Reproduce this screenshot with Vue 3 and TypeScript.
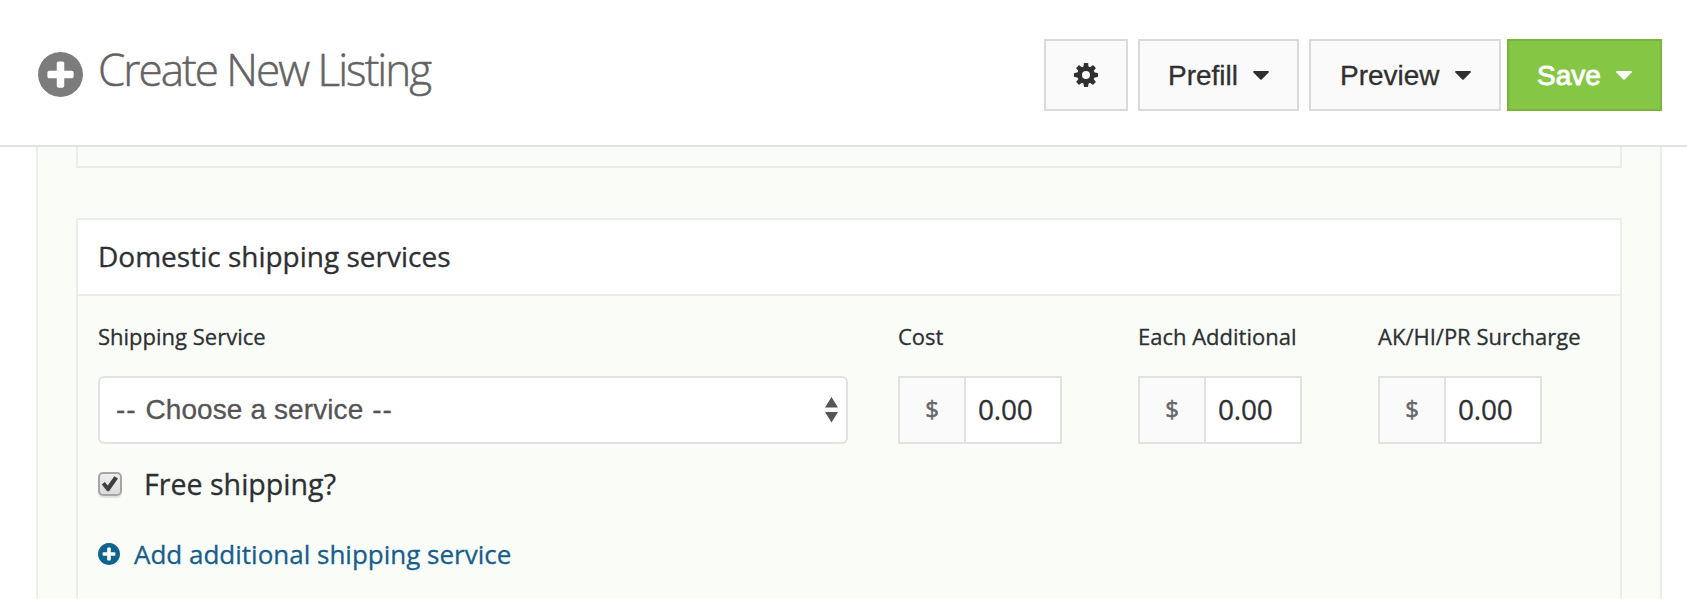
<script setup lang="ts">
import { ref } from 'vue'

interface Fee {
  label: string
  amount: string
}

const menus: string[] = ['Prefill', 'Preview', 'Save']
const fees = ref<Fee[]>([
  { label: 'Cost', amount: '0.00' },
  { label: 'Each Additional', amount: '0.00' },
  { label: 'AK/HI/PR Surcharge', amount: '0.00' },
])
const freeShipping = ref(true)

const plusCircle =
  'M1216 960v-128q0-26-19-45t-45-19h-256v-256q0-26-19-45t-45-19h-128q-26 0-45 19t-19 45v256h-256q-26 0-45 19t-19 45v128q0 26 19 45t45 19h256v256q0 26 19 45t45 19h128q26 0 45-19t19-45v-256h256q26 0 45-19t19-45zm320-64q0 209-103 385.5t-279.5 279.5-385.5 103-385.5-103-279.5-279.5-103-385.5 103-385.5 279.5-279.5 385.5-103 385.5 103 279.5 279.5 103 385.5z'
const toothAngles = [0, 45, 90, 135, 180, 225, 270, 315]
</script>

<template>
  <div class="page">
    <header class="topbar">
      <svg class="title-icon" viewBox="0 128 1536 1536"><path :d="plusCircle" /></svg>
      <h1 class="title">Create New Listing</h1>
      <div class="actions">
        <button class="btn gear" aria-label="Settings">
          <svg viewBox="-12 -12 24 24">
            <circle class="gear-ring" r="6.400" />
            <path v-for="a in toothAngles" :key="a" d="M-2.700 -7.500L-2.100 -11.600Q-2 -12 -1.600 -12H1.600Q2 -12 2.100 -11.600L2.700 -7.500Z" :transform="`rotate(${a})`" />
          </svg>
        </button>
        <button v-for="m in menus" :key="m" class="btn" :class="m.toLowerCase()">
          <span class="btn-text">{{ m }}</span>
          <svg class="caret" viewBox="0 0 16 9"><path d="M1 0H15Q16.400 .3 15.600 1.400L8.700 8.500Q8 9.100 7.300 8.500L.4 1.400Q-.4 .3 1 0Z" /></svg>
        </button>
      </div>
    </header>

    <main class="panel">
      <section class="card previous"></section>
      <section class="card services">
        <h2 class="card-head">Domestic shipping services</h2>
        <div class="card-body">
          <div class="fields">
            <div class="field service">
              <label class="label">Shipping Service</label>
              <div class="select">
                <span class="select-text"><span class="dashes">-- </span>Choose a service<span class="dashes"> --</span></span>
                <svg class="arrows" viewBox="0 0 13 26"><path d="M6.500 0L13 10.500H0ZM0 15H13L6.500 25.500Z" /></svg>
              </div>
            </div>
            <div v-for="fee in fees" :key="fee.label" class="field fee">
              <label class="label">{{ fee.label }}</label>
              <div class="money">
                <span class="currency">$</span>
                <span class="amount">{{ fee.amount }}</span>
              </div>
            </div>
          </div>
          <div class="free" @click="freeShipping = !freeShipping">
            <span class="checkbox">
              <svg v-if="freeShipping" viewBox="0 0 20 20"><path d="M1.800 10.600L4.800 8L7.700 11.500L14.300 2.200L18 4.600L9 17.300H7.200Z" /></svg>
            </span>
            <span>Free shipping?</span>
          </div>
          <a class="add">
            <svg viewBox="0 128 1536 1536"><path :d="plusCircle" /></svg>
            <span>Add additional shipping service</span>
          </a>
        </div>
      </section>
    </main>
  </div>
</template>

<style>
html,
body {
  background: #fff;
  overflow: hidden;
}
</style>

<style scoped>
.page {
  box-sizing: border-box;
  height: 599px;
  overflow: hidden;
  display: flex;
  flex-direction: column;
  font-family: 'Open Sans', sans-serif;
  color: #2d3032;
  -webkit-text-stroke: 0.3px currentColor;
}
.page * {
  box-sizing: border-box;
}
.topbar {
  flex: none;
  height: 147px;
  border-bottom: 2px solid #e3e3e3;
  display: flex;
  align-items: flex-start;
  padding: 39px 25px 0 38px;
}
.title-icon {
  width: 45px;
  height: 45px;
  margin-top: 13px;
  fill: #7c7c7c;
}
.title {
  margin: 0 0 0 15px;
  font-size: 44px;
  line-height: 60px;
  font-weight: 300;
  letter-spacing: -1.98px;
  color: #636363;
  white-space: nowrap;
  -webkit-text-stroke: 0.5px #636363;
}
.actions {
  margin-left: auto;
  display: flex;
}
.btn {
  height: 72px;
  margin: 0 0 0 10px;
  padding: 0;
  border: 2px solid #dadada;
  background: #fafafa;
  color: #303030;
  fill: #303030;
  display: flex;
  align-items: center;
  font: 28px 'Liberation Sans', Arial, sans-serif;
  white-space: nowrap;
  -webkit-text-stroke: 0.3px currentColor;
}
.btn-text {
  padding-top: 1px;
}
.gear {
  width: 84px;
  justify-content: center;
}
.gear svg {
  width: 24px;
  height: 24px;
}
.gear-ring {
  fill: none;
  stroke: #303030;
  stroke-width: 4.8px;
}
.prefill {
  width: 161px;
  padding-left: 28px;
}
.preview {
  width: 192px;
  padding-left: 29px;
}
.save {
  width: 155px;
  margin-left: 6px;
  padding-left: 28px;
  background: #85c744;
  border-color: #78b43d;
  color: #fff;
  fill: #fff;
}
.save .btn-text {
  -webkit-text-stroke: 0.9px #fff;
}
.caret {
  width: 16px;
  height: 9px;
  margin-left: auto;
  margin-right: 28px;
}
.panel {
  flex: 1;
  min-height: 0;
  margin: 0 25px 0 36px;
  padding: 0 38px;
  border: solid #ebedeb;
  border-width: 0 2px;
  background: #fafcf8;
  display: flex;
  flex-direction: column;
}
.card {
  border: 2px solid #ebedeb;
}
.previous {
  flex: none;
  height: 21px;
  border-top: 0;
}
.services {
  flex: 1;
  margin-top: 50px;
  border-bottom: 0;
}
.card-head {
  margin: 0;
  height: 76px;
  padding: 0 20px;
  border-bottom: 2px solid #ebedeb;
  background: #fff;
  font-size: 28px;
  font-weight: 400;
  line-height: 72px;
}
.card-body {
  padding: 20px 20px 0;
}
.fields {
  display: flex;
}
.field {
  flex: none;
}
.service {
  width: 750px;
  margin-right: 50px;
}
.fee {
  width: 240px;
}
.fee:last-child {
  width: 204px;
}
.label {
  display: block;
  height: 60px;
  font-size: 22px;
  line-height: 40px;
  white-space: nowrap;
}
.select {
  height: 68px;
  border: 2px solid #e1e3e1;
  border-radius: 6px;
  background: #fff;
  display: flex;
  align-items: center;
  justify-content: space-between;
  padding: 0 8px 0 16px;
  font-family: 'Liberation Sans', Arial, sans-serif;
  font-size: 28px;
  color: #555;
}
.select-text {
  letter-spacing: 0.1px;
}
.dashes {
  letter-spacing: 1px;
}
.arrows {
  width: 13px;
  height: 26px;
  fill: #555;
}
.money {
  width: 164px;
  height: 68px;
  border: 2px solid #e1e3e1;
  display: flex;
  line-height: 62px;
}
.currency {
  width: 66px;
  border-right: 2px solid #e1e3e1;
  background: #fafafa;
  text-align: center;
  font-size: 24px;
  color: #666;
  -webkit-text-stroke: 0.5px #666;
}
.amount {
  flex: 1;
  padding-left: 12px;
  background: #fff;
  font-size: 28px;
  letter-spacing: -0.2px;
}
.free {
  height: 38px;
  margin-top: 21px;
  display: flex;
  align-items: center;
  font-size: 28.6px;
  line-height: 38px;
}
.checkbox {
  width: 24px;
  height: 24px;
  margin-right: 22px;
  border: 2px solid #a6a6a6;
  border-radius: 5px;
  background: linear-gradient(#eee, #dcdcdc);
  box-shadow: 0 2px 1px rgba(0, 0, 0, 0.1);
}
.checkbox svg {
  display: block;
  width: 20px;
  height: 20px;
  fill: #3f3f3f;
}
.add {
  height: 38px;
  margin-top: 32px;
  display: flex;
  align-items: center;
  font-size: 26px;
  line-height: 38px;
  color: #175e8c;
}
.add svg {
  width: 22px;
  height: 22px;
  margin-right: 14px;
  fill: #11638f;
}
</style>
